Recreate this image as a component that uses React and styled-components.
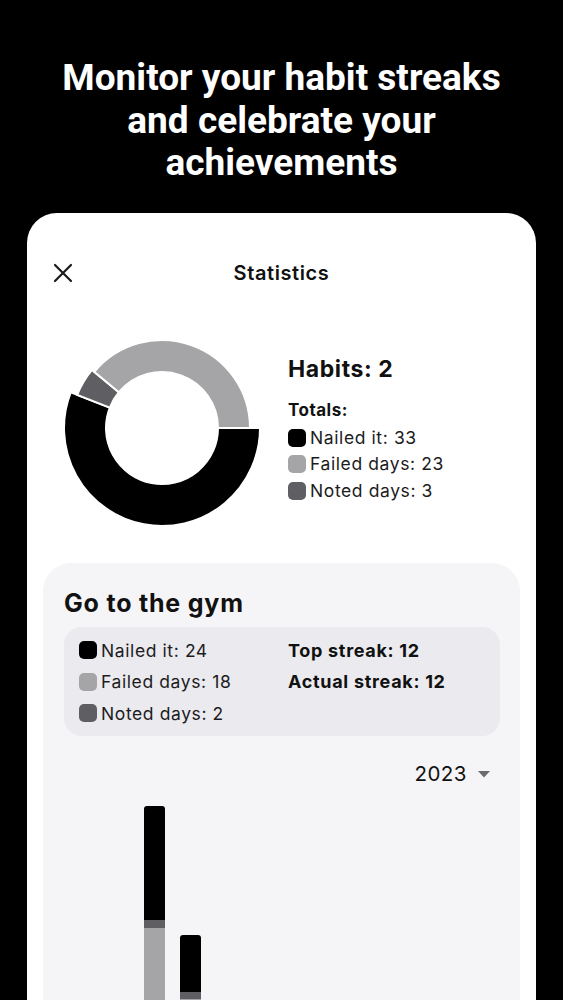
import styled, { createGlobalStyle } from "styled-components"

const GlobalStyle = createGlobalStyle`
  html, body {
    margin: 0;
    padding: 0;
    background: #000;
    height: 1000px;
    overflow: hidden;
  }
  * { box-sizing: border-box; }
`

const COLORS = {
  nailed: "#000000",
  failed: "#a5a4a7",
  noted: "#5f5e62",
}

const totals = [
  { key: "nailed", label: "Nailed it", value: 33 },
  { key: "failed", label: "Failed days", value: 23 },
  { key: "noted", label: "Noted days", value: 3 },
]

const gym = [
  { key: "nailed", label: "Nailed it", value: 24 },
  { key: "failed", label: "Failed days", value: 18 },
  { key: "noted", label: "Noted days", value: 2 },
]

// donut runs clockwise from 3 o'clock
const donutOrder = ["nailed", "noted", "failed"]

// stacked bars, top to bottom
const bars = [
  [{ key: "nailed", h: 114 }, { key: "noted", h: 8 }, { key: "failed", h: 173 }],
  [{ key: "nailed", h: 57 }, { key: "noted", h: 7 }, { key: "failed", h: 102 }],
]

const polar = (r, a) => {
  const rad = (a * Math.PI) / 180
  return [100 + r * Math.cos(rad), 100 + r * Math.sin(rad)]
}

const arc = (a0, a1, r0, r1) => {
  const large = a1 - a0 > 180 ? 1 : 0
  const [x0, y0] = polar(r1, a0)
  const [x1, y1] = polar(r1, a1)
  const [x2, y2] = polar(r0, a1)
  const [x3, y3] = polar(r0, a0)
  return `M${x0} ${y0} A${r1} ${r1} 0 ${large} 1 ${x1} ${y1} L${x2} ${y2} A${r0} ${r0} 0 ${large} 0 ${x3} ${y3} Z`
}

const outerRadius = { nailed: 98, noted: 91, failed: 88 }

const Donut = () => {
  const sum = totals.reduce((s, t) => s + t.value, 0)
  let start = 0
  return (
    <DonutSvg width="200" height="200" viewBox="0 0 200 200">
      {donutOrder.map((key) => {
        const t = totals.find((x) => x.key === key)
        const end = start + (t.value / sum) * 360
        const d = arc(start, end, 56, outerRadius[key])
        start = end
        return <path key={key} d={d} fill={COLORS[key]} stroke="#fff" strokeWidth="2" />
      })}
    </DonutSvg>
  )
}

export default function App() {
  return (
    <>
      <GlobalStyle />
      <Page>
        <Headline>
          Monitor your habit streaks
          <br />
          and celebrate your
          <br />
          achievements
        </Headline>
        <Card>
          <Header>
            <CloseButton>
              <svg width="20" height="20" viewBox="0 0 20 20">
                <path d="M2 2 L18 18 M18 2 L2 18" stroke="#1a1a1a" strokeWidth="2.2" strokeLinecap="round" />
              </svg>
            </CloseButton>
            <HeaderTitle>Statistics</HeaderTitle>
          </Header>

          <Summary>
            <Donut />
            <LegendColumn>
              <HabitsCount>Habits: 2</HabitsCount>
              <TotalsLabel>Totals:</TotalsLabel>
              {totals.map((t) => (
                <LegendItem key={t.key} $row={26.5}>
                  <Swatch $color={COLORS[t.key]} />
                  {t.label}: {t.value}
                </LegendItem>
              ))}
            </LegendColumn>
          </Summary>

          <HabitCard>
            <HabitTitle>Go to the gym</HabitTitle>
            <StatsBox>
              <div>
                {gym.map((t) => (
                  <LegendItem key={t.key} $row={31.5}>
                    <Swatch $color={COLORS[t.key]} />
                    {t.label}: {t.value}
                  </LegendItem>
                ))}
              </div>
              <div>
                <Streak>Top streak: 12</Streak>
                <Streak>Actual streak: 12</Streak>
              </div>
            </StatsBox>

            <YearRow>
              <Year>2023</Year>
              <svg width="12" height="7" viewBox="0 0 12 7">
                <path d="M0 0 L12 0 L6 6.5 Z" fill="#6b6a6e" />
              </svg>
            </YearRow>

            <Chart>
              {bars.map((bar, i) => (
                <Bar key={i}>
                  {bar.map((seg) => (
                    <BarSegment key={seg.key} $color={COLORS[seg.key]} style={{ height: seg.h }} />
                  ))}
                </Bar>
              ))}
            </Chart>
          </HabitCard>
        </Card>
      </Page>
    </>
  )
}

const Page = styled.div`
  display: flex;
  flex-direction: column;
  padding-top: 57px;
`

const Headline = styled.h1`
  margin: 0;
  color: #fff;
  font-family: Roboto, "Liberation Sans", sans-serif;
  font-weight: 700;
  font-size: 37px;
  line-height: 42.5px;
  text-align: center;
`

const Card = styled.div`
  margin: 28px 27px 0;
  background: #fff;
  border-radius: 30px 30px 0 0;
  height: 800px;
  font-family: Inter, "Noto Sans", sans-serif;
  color: #111;
`

const Header = styled.div`
  position: relative;
  display: flex;
  align-items: center;
  justify-content: center;
  height: 56px;
  margin-top: 32px;
`

const CloseButton = styled.div`
  position: absolute;
  left: 26px;
  top: 50%;
  transform: translateY(-50%);
  display: flex;
`

const HeaderTitle = styled.div`
  font-size: 20px;
  font-weight: 600;
  letter-spacing: 0.6px;
`

const Summary = styled.div`
  display: flex;
  margin-top: 27px;
  padding-left: 35px;
`

const DonutSvg = styled.svg`
  flex-shrink: 0;
  display: block;
`

const LegendColumn = styled.div`
  margin-left: 26px;
  padding-top: 27px;
  display: flex;
  flex-direction: column;
`

const HabitsCount = styled.div`
  font-size: 23px;
  font-weight: 700;
  line-height: 28px;
  letter-spacing: 0.6px;
`

const TotalsLabel = styled.div`
  font-size: 17px;
  font-weight: 700;
  line-height: 22px;
  letter-spacing: 0.5px;
  margin-top: 16px;
  margin-bottom: 4px;
`

const LegendItem = styled.div`
  display: flex;
  align-items: center;
  gap: 4px;
  font-size: 17.5px;
  letter-spacing: 0.6px;
  line-height: ${(p) => p.$row}px;
  color: #1c1c1e;
`

const Swatch = styled.span`
  width: 18px;
  height: 18px;
  border-radius: 5px;
  background: ${(p) => p.$color};
`

const HabitCard = styled.div`
  margin: 35px 16px 0;
  padding: 25px 20px 0 21px;
  background: #f5f4f7;
  border-radius: 28px 28px 0 0;
  height: 600px;
`

const HabitTitle = styled.div`
  font-size: 25px;
  font-weight: 700;
  line-height: 30px;
  letter-spacing: 0.8px;
`

const StatsBox = styled.div`
  margin-top: 9px;
  padding: 8px 15px 7px;
  background: #ebeaee;
  border-radius: 18px;
  display: grid;
  grid-template-columns: 209px 1fr;
`

const Streak = styled.div`
  font-size: 18px;
  font-weight: 700;
  line-height: 31.5px;
  letter-spacing: 0.7px;
`

const YearRow = styled.div`
  margin-top: 25px;
  display: flex;
  align-items: center;
  justify-content: flex-end;
  gap: 11px;
  padding-right: 10px;
`

const Year = styled.div`
  font-size: 20.5px;
  line-height: 26px;
  letter-spacing: 0.5px;
  color: #111;
`

const Chart = styled.div`
  margin-top: 10px;
  height: 304px;
  display: flex;
  align-items: flex-end;
  gap: 15px;
  padding-left: 80px;
`

const Bar = styled.div`
  width: 21px;
  display: flex;
  flex-direction: column;
  border-radius: 3px 3px 0 0;
  overflow: hidden;
`

const BarSegment = styled.div`
  background: ${(p) => p.$color};
`
